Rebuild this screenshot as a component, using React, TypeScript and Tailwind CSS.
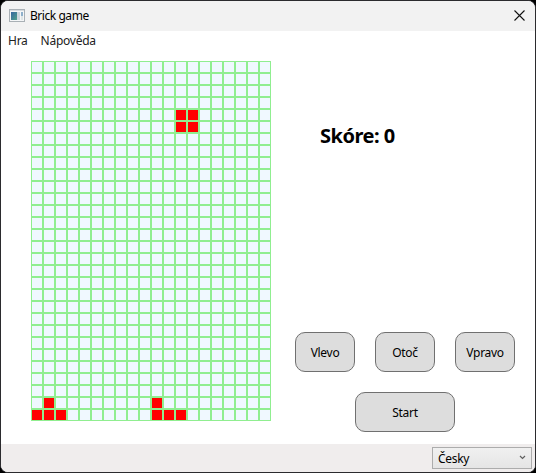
import React from 'react';

const COLS = 20;
const ROWS = 30;
const filled = new Set(['4-12', '4-13', '5-12', '5-13', '28-1', '29-0', '29-1', '29-2', '28-10', '29-10', '29-11', '29-12']);

function Board() {
  return (
    <div className="grid h-[360px] w-[240px] grid-cols-[repeat(20,12px)] grid-rows-[repeat(30,12px)]">
      {Array.from({ length: COLS * ROWS }, (_, i) => {
        const key = `${Math.floor(i / COLS)}-${i % COLS}`;
        return (
          <div key={key} className={`border border-[#90ee90] ${filled.has(key) ? 'bg-[#ff0000]' : 'bg-[#f0f8ff]'}`} />
        );
      })}
    </div>
  );
}

function GameButton({ label, wide = false }: { label: string; wide?: boolean }) {
  return (
    <button
      className={`flex h-10 items-center justify-center rounded-[10px] border border-[#707070] bg-[#dddddd] pt-px text-[12px] leading-4 tracking-[-0.3px] text-black ${wide ? 'w-[100px]' : 'w-[60px]'}`}
    >
      {label}
    </button>
  );
}

function AppIcon() {
  return (
    <svg className="mb-[2px]" width="16" height="13" viewBox="0 0 16 13">
      <defs>
        <linearGradient id="screen" x1="0" y1="0" x2="1" y2="1">
          <stop offset="0" stopColor="#3566a0" />
          <stop offset="1" stopColor="#4fa08a" />
        </linearGradient>
      </defs>
      <rect x="0.5" y="0.5" width="15" height="12" fill="#f4f6f7" stroke="#a9b0b5" />
      <rect x="1" y="1" width="14" height="1" fill="#d5dade" />
      <rect x="2" y="3" width="6" height="8" fill="url(#screen)" />
      <rect x="8" y="3" width="3" height="8" fill="#cbd5dc" />
      <rect x="12" y="3" width="2" height="4" fill="#8fb0cb" />
      <rect x="12" y="7" width="2" height="4" fill="#dfe5e6" />
    </svg>
  );
}

export default function App() {
  return (
    <div className="h-[473px] w-[536px] overflow-hidden bg-black font-['Noto_Sans','Open_Sans',sans-serif]">
      <div className="flex h-full flex-col overflow-hidden rounded-[8px] border border-[#2b2b2e] bg-white">
        <header className="flex h-[30px] shrink-0 items-center bg-[#f2f2f2] pr-[10px] pl-2">
          <AppIcon />
          <span className="ml-[5px] text-[12px] leading-4 tracking-[-0.45px] text-black">Brick game</span>
          <svg className="ml-auto mb-px" width="11" height="11" viewBox="0 0 11 11">
            <path d="M0.5 0.5 L10.5 10.5 M10.5 0.5 L0.5 10.5" stroke="#111" strokeWidth="1.1" fill="none" />
          </svg>
        </header>
        <nav className="flex h-[30px] shrink-0 gap-[13px] pt-[2px] pl-[7px] text-[12px] leading-4 tracking-[-0.25px] text-[#212121]">
          <span>Hra</span>
          <span>Nápověda</span>
        </nav>
        <main className="flex flex-1 pl-[30px]">
          <Board />
          <section className="ml-6 flex w-[220px] flex-col">
            <h1 className="mt-[61px] ml-[25px] text-[20px] leading-7 font-bold tracking-[-0.5px] whitespace-nowrap text-black">
              Skóre: 0
            </h1>
            <div className="mt-[182px] flex gap-5">
              <GameButton label="Vlevo" />
              <GameButton label="Otoč" />
              <GameButton label="Vpravo" />
            </div>
            <div className="mt-5 flex justify-center">
              <GameButton label="Start" wide />
            </div>
          </section>
        </main>
        <footer className="flex h-[28px] shrink-0 items-start justify-end bg-[#f0eded] pt-[3px] pr-[3px]">
          <div className="flex h-[22px] w-[100px] items-center justify-between border border-[#acacac] bg-linear-to-b from-[#f0f0f0] to-[#e5e5e5] pr-[5px] pl-[5px] text-[12px] leading-4 text-black">
            <span className="pt-px tracking-[-0.3px]">Česky</span>
            <svg className="mb-[2px]" width="7" height="5" viewBox="0 0 7 5">
              <path d="M1 1 L3.5 3.5 L6 1" stroke="#606060" strokeWidth="1.2" fill="none" />
            </svg>
          </div>
        </footer>
      </div>
    </div>
  );
}
